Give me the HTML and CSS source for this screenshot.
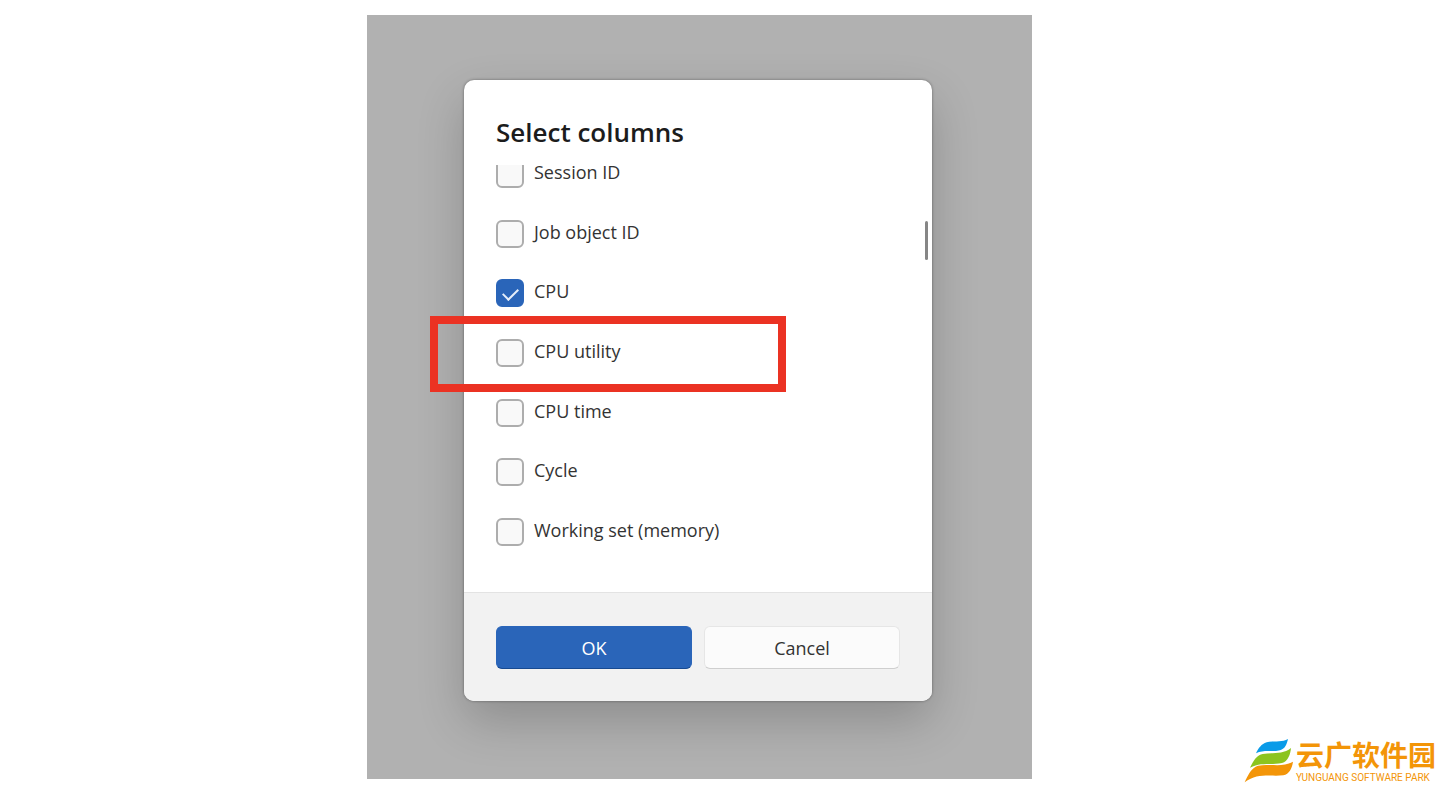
FILE: index.html
```html
<!DOCTYPE html>
<html lang="en">
<head>
<meta charset="utf-8">
<meta name="viewport" content="width=device-width, initial-scale=1.0">
<title>Select columns</title>
<link rel="stylesheet" href="styles.css">
</head>
<body>
<main class="page">
<div class="stage">
<form class="dialog">
<div class="dialog-body">
<h1>Select columns</h1>
<div class="list-view">
<ul class="columns">
<li><input type="checkbox" id="session"><label for="session">Session ID</label></li>
<li><input type="checkbox" id="job"><label for="job">Job object ID</label></li>
<li><input type="checkbox" id="cpu" checked><label for="cpu">CPU</label></li>
<li><input type="checkbox" id="utility"><label for="utility">CPU utility</label></li>
<li><input type="checkbox" id="time"><label for="time">CPU time</label></li>
<li><input type="checkbox" id="cycle"><label for="cycle">Cycle</label></li>
<li><input type="checkbox" id="memory"><label for="memory">Working set (memory)</label></li>
</ul>
</div>
<div class="scroll-thumb"></div>
</div>
<div class="dialog-footer">
<button class="btn btn-primary" type="button">OK</button>
<button class="btn" type="button">Cancel</button>
</div>
</form>
<div class="highlight"></div>
</div>
</main>
<div class="brand">
<svg class="brand-mark" viewBox="0 0 162 156" aria-hidden="true">
<path fill="#0a9be8" d="M42 52C50 36 58 24 74 19C94 14 118 20 138 9C134 25 130 38 114 43C90 49 66 40 42 52Z"/>
<path fill="#8cc41f" d="M24 95C34 74 44 58 62 54C92 49 122 56 147 36C145 56 138 76 120 81C88 88 56 77 24 95Z"/>
<path fill="#f39508" d="M8 139C18 116 28 96 48 89C82 82 122 96 153 77C150 98 142 114 124 118C84 122 46 110 8 139Z"/>
</svg>
<div class="brand-text">
<span class="brand-name" lang="zh">云广软件园</span>
<span class="brand-sub">YUNGUANG SOFTWARE PARK</span>
</div>
</div>
</body>
</html>
```
FILE: styles.css
```css
* {
    box-sizing: border-box;
}
body {
    margin: 0;
    background: #fff;
    color: #333;
    font-family: "Open Sans", "Noto Sans", sans-serif;
}
.page {
    display: flex;
    justify-content: center;
    padding: 15px 41px 9px 0;
}
.stage {
    position: relative;
    width: 665px;
    padding: 65px 100px 78px 97px;
    background: #b1b1b1;
    overflow: hidden;
}
.dialog {
    background: #fff;
    border-radius: 10px;
    box-shadow: 0 0 3px rgba(0, 0, 0, 0.4), 0 20px 48px rgba(0, 0, 0, 0.2);
}
.dialog-body {
    position: relative;
    padding: 36px 32px 46px;
}
h1 {
    margin: 0 0 17px;
    color: #1c1c1c;
    font-size: 26px;
    font-weight: 600;
    line-height: 32px;
}
.list-view {
    overflow: hidden;
}
.columns {
    display: flex;
    flex-direction: column;
    justify-content: space-between;
    height: 386px;
    margin: -5px 0 0;
    padding: 0;
    list-style: none;
}
.columns li {
    display: flex;
    gap: 10px;
}
.columns input {
    appearance: none;
    flex: none;
    width: 28px;
    height: 28px;
    margin: 0;
    border: 2px solid #adadad;
    border-radius: 6px;
    background: #f9f9f9;
}
.columns input:checked {
    border-color: #2a65b9;
    background: #2a65b9;
}
.columns input:checked::after {
    content: "";
    display: block;
    width: 13px;
    height: 7px;
    margin: 7px 5px;
    border: solid #e6eefa;
    border-width: 0 0 2px 2px;
    transform: rotate(-45deg);
}
.columns label {
    font-size: 18px;
    line-height: 24px;
}
.scroll-thumb {
    position: absolute;
    top: 141px;
    right: 4px;
    width: 3px;
    height: 39px;
    border-radius: 2px;
    background: #868686;
}
.dialog-footer {
    display: flex;
    gap: 12px;
    padding: 33px 32px 32px;
    border-top: 1px solid #e3e3e3;
    border-radius: 0 0 10px 10px;
    background: #f2f2f2;
}
.btn {
    flex: 1;
    height: 43px;
    padding: 0;
    border: 1px solid #e6e6e6;
    border-bottom-color: #cfcfcf;
    border-radius: 6px;
    background: #fbfbfb;
    color: #333;
    font-family: inherit;
    font-size: 18px;
}
.btn-primary {
    border-color: #2a65b9;
    border-bottom-color: #174a91;
    background: #2a65b9;
    color: #fff;
}
.highlight {
    position: absolute;
    top: 301px;
    left: 63px;
    width: 356px;
    height: 76px;
    border: 8px solid #eb3223;
    pointer-events: none;
}
/* site logo, bottom right corner */
.brand {
    position: absolute;
    right: 4px;
    bottom: 0;
    display: flex;
    color: #f39508;
}
.brand-mark {
    width: 54px;
    height: 52px;
}
.brand-text {
    display: flex;
    flex-direction: column;
    width: 140px;
}
.brand-name {
    font-family: "Noto Sans CJK SC", sans-serif;
    font-size: 28px;
    font-weight: 700;
    line-height: 36px;
}
.brand-sub {
    font-family: Roboto, "Liberation Sans", sans-serif;
    font-size: 10px;
    line-height: 12px;
    white-space: nowrap;
}
```
